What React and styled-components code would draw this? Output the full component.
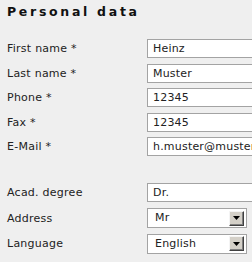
import React from "react";
import styled, { createGlobalStyle } from "styled-components";

const GlobalStyle = createGlobalStyle`
  html, body {
    margin: 0;
    padding: 0;
    background: #efefef;
  }
  body {
    font-family: "DejaVu Sans", Verdana, sans-serif;
    color: #1a1a1a;
  }
`;

const personal = [
  { label: "First name *", value: "Heinz" },
  { label: "Last name *", value: "Muster" },
  { label: "Phone *", value: "12345" },
  { label: "Fax *", value: "12345" },
  { label: "E-Mail *", value: "h.muster@muster.de" },
];

function SelectBox({ value }) {
  return (
    <Select>
      <SelectValue>{value}</SelectValue>
      <ArrowButton>
        <svg width="7" height="4" viewBox="0 0 7 4">
          <path d="M0 0h7L3.5 4z" fill="#000" />
        </svg>
      </ArrowButton>
    </Select>
  );
}

function App() {
  return (
    <Page>
      <GlobalStyle />
      <Title>Personal data</Title>
      <Form>
        {personal.map((f) => (
          <React.Fragment key={f.label}>
            <Label>{f.label}</Label>
            <TextInput defaultValue={f.value} />
          </React.Fragment>
        ))}
      </Form>
      <Form $second>
        <Label>Acad. degree</Label>
        <TextInput defaultValue="Dr." />
        <Label>Address</Label>
        <SelectBox value="Mr" />
        <Label>Language</Label>
        <SelectBox value="English" />
      </Form>
    </Page>
  );
}

const Page = styled.div`
  width: 252px;
  height: 262px;
  overflow: hidden;
  box-sizing: border-box;
  padding: 6px 0 0 7px;
`;

const Title = styled.h2`
  margin: 0;
  font-size: 12.5px;
  font-weight: bold;
  letter-spacing: 2.7px;
  line-height: 12px;
  color: #111;
`;

const Form = styled.div`
  display: grid;
  grid-template-columns: 140px 130px;
  grid-auto-rows: 19px;
  row-gap: ${(p) => (p.$second ? "6.5px" : "5.5px")};
  align-items: center;
  margin-top: ${(p) => (p.$second ? "27px" : "21px")};
`;

const Label = styled.div`
  font-size: 11px;
  letter-spacing: 0.25px;
  line-height: 19px;
  white-space: nowrap;
  color: #222;
`;

const TextInput = styled.input`
  box-sizing: border-box;
  width: 130px;
  height: 19px;
  margin: 0;
  padding: 0 5px;
  border: 1px solid #a3a3a3;
  background: #fff;
  font-family: "DejaVu Sans", Verdana, sans-serif;
  font-size: 11px;
  letter-spacing: 0.2px;
  color: #222;
  outline: none;
`;

const Select = styled.div`
  box-sizing: border-box;
  width: 100px;
  height: 20px;
  display: flex;
  align-items: center;
  justify-content: space-between;
  border: 1px solid #a3a3a3;
  background: #fff;
  padding: 0 2px 0 7px;
  font-size: 11px;
  letter-spacing: 0.2px;
  color: #222;
`;

const SelectValue = styled.span`
  line-height: 18px;
`;

const ArrowButton = styled.span`
  box-sizing: border-box;
  width: 15px;
  height: 15px;
  display: flex;
  align-items: center;
  justify-content: center;
  background: #d4d0c8;
  border-top: 1px solid #f4f4f4;
  border-left: 1px solid #f4f4f4;
  border-right: 1px solid #404040;
  border-bottom: 1px solid #404040;
  box-shadow: inset -1px -1px 0 #808080;
`;

export default App;
